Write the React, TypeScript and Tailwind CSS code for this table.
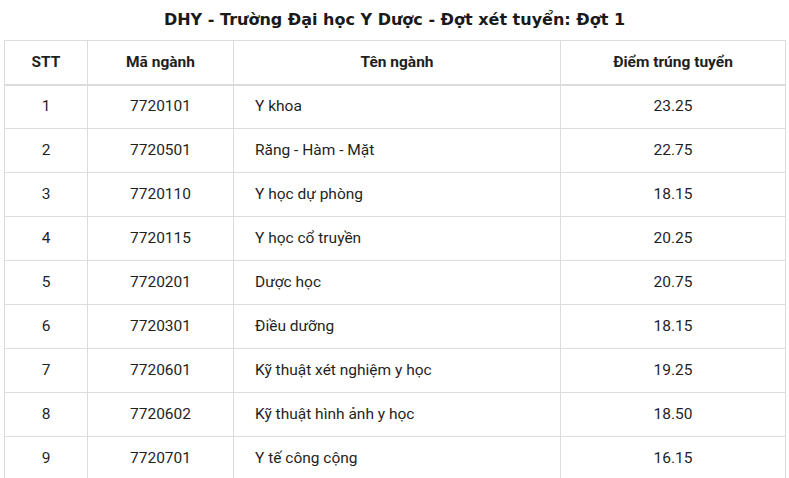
const rows = [
  ['1', '7720101', 'Y khoa', '23.25'],
  ['2', '7720501', 'Răng - Hàm - Mặt', '22.75'],
  ['3', '7720110', 'Y học dự phòng', '18.15'],
  ['4', '7720115', 'Y học cổ truyền', '20.25'],
  ['5', '7720201', 'Dược học', '20.75'],
  ['6', '7720301', 'Điều dưỡng', '18.15'],
  ['7', '7720601', 'Kỹ thuật xét nghiệm y học', '19.25'],
  ['8', '7720602', 'Kỹ thuật hình ảnh y học', '18.50'],
  ['9', '7720701', 'Y tế công cộng', '16.15'],
];

export default function App() {
  return (
    <div className="w-[789px] h-[478px] overflow-hidden bg-white">
      <h1 className="h-10 flex items-center justify-center text-[16px] font-bold text-[#1a1a1a] font-['DejaVu_Sans',Verdana,sans-serif]">
        DHY - Trường Đại học Y Dược - Đợt xét tuyển: Đợt 1
      </h1>
      <table className="ml-1 w-[781px] border-collapse table-fixed text-[15.5px] text-[#1f1f1f] font-['Roboto',sans-serif]">
        <colgroup>
          <col className="w-[83px]" />
          <col className="w-[146px]" />
          <col className="w-[327px]" />
          <col className="w-[225px]" />
        </colgroup>
        <thead>
          <tr className="h-[44px] border-b-2 border-[#dcdcdc]">
            <th className="border border-[#dcdcdc] font-bold">STT</th>
            <th className="border border-[#dcdcdc] font-bold">Mã ngành</th>
            <th className="border border-[#dcdcdc] font-bold">Tên ngành</th>
            <th className="border border-[#dcdcdc] font-bold">Điểm trúng tuyển</th>
          </tr>
        </thead>
        <tbody>
          {rows.map((r) => (
            <tr key={r[0]} className="h-[44px]">
              <td className="border border-[#dcdcdc] text-center">{r[0]}</td>
              <td className="border border-[#dcdcdc] text-center">{r[1]}</td>
              <td className="border border-[#dcdcdc] pl-[21px]">{r[2]}</td>
              <td className="border border-[#dcdcdc] text-center">{r[3]}</td>
            </tr>
          ))}
        </tbody>
      </table>
    </div>
  );
}
